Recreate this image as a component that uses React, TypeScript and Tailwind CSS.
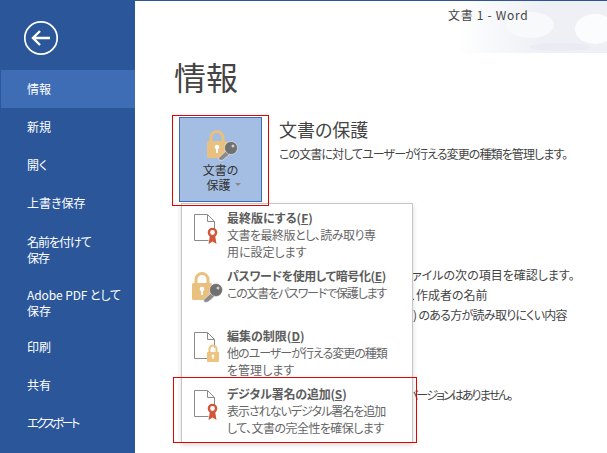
const navItems = [
    { label: "情報", active: true, h: "h-[38px]" },
    { label: "新規", h: "h-[38px]" },
    { label: "開く", h: "h-[38px]" },
    { label: "上書き保存", h: "h-[38px]" },
    { label: "名前を付けて\n保存", h: "h-[56px] tracking-[-1px]" },
    { label: "Adobe PDF として\n保存", h: "h-[50px] tracking-[-0.1px]" },
    { label: "印刷", h: "h-[38px]" },
    { label: "共有", h: "h-[38px]" },
    { label: "エクスポート", h: "h-[38px] tracking-[-2.4px]" },
];

function DocShape() {
    return (
        <path
            d="M15 27H1V1H14L21 8V16 M14 1V8H21"
            fill="#fff"
            stroke="#8a8a8a"
            strokeWidth="1"
        />
    );
}

function RibbonDocIcon() {
    return (
        <svg width="28" height="32" viewBox="0 0 28 32">
            <g transform="translate(0.5 0.5)">
                <DocShape />
            </g>
            <path d="M17 22L15.5 31L19.5 28.5L23.5 31L22 22Z" fill="#d2573a" />
            <circle cx="19.5" cy="19.5" r="3.6" fill="#fff" stroke="#d2573a" strokeWidth="2.4" />
        </svg>
    );
}

function LockDocIcon() {
    return (
        <svg width="28" height="32" viewBox="0 0 28 32">
            <g transform="translate(0.5 0.5)">
                <DocShape />
            </g>
            <path d="M16.5 21V18a3.5 3.5 0 0 1 7 0V21" fill="none" stroke="#eec27f" strokeWidth="2" />
            <rect x="14" y="21" width="12" height="10" rx="1" fill="#eec27f" />
            <circle cx="20" cy="25" r="1.4" fill="#fff" />
            <rect x="19.4" y="25" width="1.2" height="3" fill="#fff" />
        </svg>
    );
}

function LockKeyIcon() {
    return (
        <svg width="32" height="32" viewBox="0 0 32 32">
            <path d="M5 12V8.5a6 6 0 0 1 12 0V12" fill="none" stroke="#eac07e" strokeWidth="3" />
            <rect x="1" y="12" width="20" height="17" rx="1.5" fill="#eac07e" />
            <circle cx="11" cy="18" r="2.3" fill="#fff" />
            <rect x="10" y="18" width="2" height="6" fill="#fff" />
            <path d="M21 21L12.5 29L13.5 31.5L17 31L24.5 24.5Z" fill="#8b8b8b" stroke="#fff" strokeWidth="0.5" />
            <circle cx="25" cy="19" r="6.5" fill="#707070" stroke="#fff" strokeWidth="0.5" />
            <circle cx="27" cy="17" r="1.5" fill="#cfcfcf" />
        </svg>
    );
}

const menuItems = [
    {
        icon: <RibbonDocIcon />,
        title: "最終版にする",
        key: "F",
        titleSpacing: "",
        lines: [
            { text: "文書を最終版とし、読み取り専", spacing: "tracking-[-0.5px]" },
            { text: "用に設定します", spacing: "" },
        ],
        h: "h-[58px]",
    },
    {
        icon: <LockKeyIcon />,
        title: "パスワードを使用して暗号化",
        key: "E",
        titleSpacing: "tracking-[-0.4px]",
        lines: [{ text: "この文書をパスワードで保護します", spacing: "tracking-[-1.2px]" }],
        h: "h-[60px]",
    },
    {
        icon: <LockDocIcon />,
        title: "編集の制限",
        key: "D",
        titleSpacing: "",
        lines: [
            { text: "他のユーザーが行える変更の種類", spacing: "tracking-[-1px]" },
            { text: "を管理します", spacing: "" },
        ],
        h: "h-[58px]",
    },
    {
        icon: <RibbonDocIcon />,
        title: "デジタル署名の追加",
        key: "S",
        titleSpacing: "tracking-[-0.2px]",
        lines: [
            { text: "表示されないデジタル署名を追加", spacing: "tracking-[-1px]" },
            { text: "して、文書の完全性を確保します", spacing: "tracking-[-0.55px]" },
        ],
        h: "h-[60px]",
    },
];

function ProtectMenu() {
    return (
        <div className="absolute left-[181px] top-[202px] w-[232px] h-[240px] bg-white border border-[#c6c6c6] shadow-[0_2px_5px_rgba(0,0,0,0.15)] pt-[3px]">
            {menuItems.map((item) => (
                <div key={item.title} className={`flex ${item.h}`}>
                    <div className="w-[45px] flex justify-center pt-[6px] pl-[4px] shrink-0">
                        {item.icon}
                    </div>
                    <div className="pt-[3px] text-[12px] leading-[16.5px] text-[#666]">
                        <p className={`font-bold text-[#5c5c5c] mb-[0.5px] ${item.titleSpacing}`}>
                            {item.title}(<span className="underline">{item.key}</span>)
                        </p>
                        {item.lines.map((line) => (
                            <p key={line.text} className={`whitespace-nowrap ${line.spacing}`}>
                                {line.text}
                            </p>
                        ))}
                    </div>
                </div>
            ))}
        </div>
    );
}

export default function App() {
    return (
        <div
            className="relative w-[607px] h-[453px] overflow-hidden bg-white flex border-t-[1px] border-[#2b579a] [font-feature-settings:'palt']"
            style={{ fontFamily: '"Noto Sans CJK JP", "Noto Sans", sans-serif' }}
        >
            {/* Sidebar */}
            <aside className="w-[135px] shrink-0 bg-[#2b579a] text-white text-[12px] leading-[16px]">
                <div className="h-[69px] pl-[23px] pt-[19px]">
                    <svg width="36" height="36" viewBox="0 0 36 36">
                        <circle cx="18" cy="18" r="16.2" fill="none" stroke="#fff" strokeWidth="1.7" />
                        <path d="M27 18H10M17 11L10 18L17 25" fill="none" stroke="#fff" strokeWidth="2.4" />
                    </svg>
                </div>
                {navItems.map((item) => (
                    <div
                        key={item.label}
                        className={`${item.h} ml-[1px] pl-[26px] flex items-center whitespace-pre-line ${item.active ? "bg-[#3e6db5]" : ""}`}
                    >
                        {item.label}
                    </div>
                ))}
            </aside>

            {/* Main area */}
            <main className="relative flex-1 text-[#444]">
                <header className="relative h-[52px] overflow-hidden bg-gradient-to-r from-white from-[68%] to-[#eef0f5] to-[86%] pl-[313px] pt-[6px] text-[12px] leading-[16px] tracking-[0.7px] text-[#444]">
                    <svg className="absolute left-[335px] top-0" width="137" height="52" viewBox="0 0 137 52">
                        <ellipse cx="60" cy="24" rx="24" ry="13" fill="#f8f9fb" />
                        <ellipse cx="125" cy="28" rx="20" ry="15" fill="#fbfcfd" />
                        <ellipse cx="90" cy="46" rx="30" ry="4" fill="#e9ecf2" />
                    </svg>
                    <span className="relative">文書 1 - Word</span>
                </header>
                <div className="pl-[41px]">
                    <h1 className="text-[32px] leading-[48px] text-[#444] -mt-[1px] -ml-[2px]">情報</h1>
                    <div className="flex mt-[17px]">
                        <button className="w-[83px] h-[85px] bg-[#a3bde3] border border-[#3e6db5] flex flex-col items-center pt-[11px] text-[12px] leading-[15px] text-[#333] ml-[3px]">
                            <span className="pl-[2px]">
                                <LockKeyIcon />
                            </span>
                            <span className="mt-[1px]">文書の</span>
                            <span className="flex items-center gap-[4px] pl-[6px]">
                                保護
                                <span className="w-0 h-0 border-x-[3px] border-x-transparent border-t-[3px] border-t-[#888]" />
                            </span>
                        </button>
                        <div className="ml-[17px]">
                            <h2 className="text-[18px] leading-[26px] mt-[-1px]">文書の保護</h2>
                            <p className="text-[12px] leading-[16px] mt-[4px] whitespace-nowrap tracking-[-0.9px]">
                                この文書に対してユーザーが行える変更の種類を管理します。
                            </p>
                        </div>
                    </div>
                    {/* the rest of these lines is behind the open menu */}
                    <div className="ml-[237px] mt-[63px] text-[12px] leading-[20px] whitespace-nowrap">
                        <p className="-ml-[11px]">ファイルの次の項目を確認します。</p>
                        <p className="-ml-[3px]">、作成者の名前</p>
                        <p className="tracking-[-0.7px]">) のある方が読み取りにくい内容</p>
                        <p className="mt-[60px] tracking-[-1.9px] -ml-[6px]">バージョンはありません。</p>
                    </div>
                </div>
            </main>

            <ProtectMenu />

            {/* Red annotation boxes */}
            <div className="absolute left-[172px] top-[114px] w-[97px] h-[91px] border border-[#e60000]" />
            <div className="absolute left-[173px] top-[376px] w-[244px] h-[66px] border border-[#e60000]" />
        </div>
    );
}
